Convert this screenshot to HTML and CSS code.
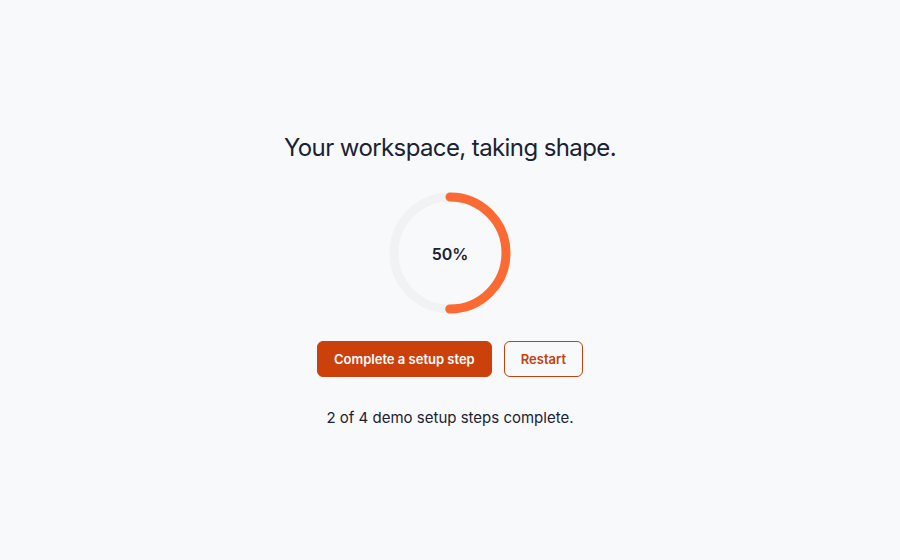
FILE: index.html
```html
<!DOCTYPE html>
<html lang="en">
<head>
<meta charset="utf-8">
<title>Workspace setup</title>
<link rel="stylesheet" href="styles.css">
</head>
<body>
<main class="page">
  <h1 class="title">Your workspace, taking shape.</h1>
  <div class="ring">
    <svg class="ring-svg" width="122" height="122" viewBox="0 0 122 122">
      <circle cx="61" cy="61" r="56" fill="none" stroke="#f1f2f4" stroke-width="9"/>
      <circle cx="61" cy="61" r="56" fill="none" stroke="#fb6a33" stroke-width="9" stroke-linecap="round" stroke-dasharray="175.93 351.86" transform="rotate(-90 61 61)"/>
    </svg>
    <span class="ring-label">50%</span>
  </div>
  <div class="actions">
    <button class="btn btn-primary">Complete a setup step</button>
    <button class="btn btn-outline">Restart</button>
  </div>
  <p class="status">2 of 4 demo setup steps complete.</p>
</main>
</body>
</html>
```
FILE: styles.css
```css
html, body {
  margin: 0;
  padding: 0;
  background: #f8f9fb;
}
body {
  font-family: Inter, "Noto Sans", sans-serif;
  color: #1b2233;
}
.page {
  height: 560px;
  display: flex;
  flex-direction: column;
  align-items: center;
  justify-content: center;
}
.title {
  margin: 0;
  font-size: 24px;
  font-weight: 400;
  line-height: 32px;
  letter-spacing: -0.6px;
  color: #1b2233;
}
.ring {
  position: relative;
  width: 122px;
  height: 122px;
  margin-top: 28px;
}
.ring-svg {
  display: block;
}
.ring-label {
  position: absolute;
  inset: 0;
  padding-top: 2px;
  display: flex;
  align-items: center;
  justify-content: center;
  font-size: 16px;
  font-weight: 600;
  color: #1b2233;
}
.actions {
  display: flex;
  gap: 12px;
  margin-top: 27px;
}
.btn {
  height: 36px;
  padding: 0 16px;
  border-radius: 6px;
  font-family: inherit;
  font-size: 13px;
  font-weight: 600;
  cursor: pointer;
}
.btn-primary {
  background: #cc410b;
  color: #fff;
  border: 1px solid #cc410b;
}
.btn-outline {
  background: transparent;
  color: #c2410c;
  border: 1px solid #c2410c;
}
.status {
  margin: 30px 0 0;
  font-size: 15px;
  line-height: 22px;
  color: #1b2233;
}
```
